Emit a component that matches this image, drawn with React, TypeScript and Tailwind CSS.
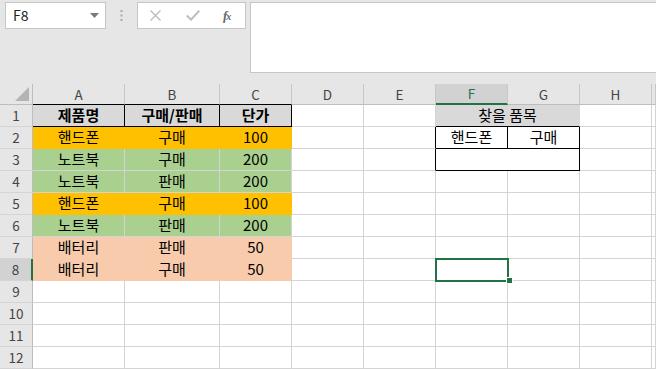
import React from "react";

type Cell = { t?: string; c?: string; span?: boolean };

const base =
  "h-[22px] border-r border-b border-[#d4d4d4] flex items-center justify-center text-[15px] text-black whitespace-nowrap";

const orange = "bg-[#ffc000] border-[#ffc000]";
const green = "bg-[#a9d08e] border-[#a9d08e]";
const peach = "bg-[#f8cbad] border-[#f8cbad]";
const head = "bg-[#d9d9d9] border-black font-bold";

function dataRow(a: string, b: string, c: string, fill: string): Cell[] {
  return [{ t: a, c: fill }, { t: b, c: fill }, { t: c, c: fill }];
}

const empty = (n: number): Cell[] => Array.from({ length: n }, () => ({}));

const rows: Cell[][] = [
  [
    { t: "제품명", c: head },
    { t: "구매/판매", c: head },
    { t: "단가", c: head },
    {},
    {},
    { t: "찾을 품목", c: "bg-[#d9d9d9] border-[#d9d9d9] border-b-black", span: true },
    {},
    {},
  ],
  [
    ...dataRow("핸드폰", "구매", "100", orange),
    {},
    { c: "border-r-black" },
    { t: "핸드폰", c: "border-black" },
    { t: "구매", c: "border-black" },
    {},
    {},
  ],
  [
    ...dataRow("노트북", "구매", "200", green),
    {},
    { c: "border-r-black" },
    { c: "border-black", span: true },
    {},
    {},
  ],
  [...dataRow("노트북", "판매", "200", green), ...empty(6)],
  [...dataRow("핸드폰", "구매", "100", orange), ...empty(6)],
  [...dataRow("노트북", "판매", "200", green), ...empty(6)],
  [...dataRow("배터리", "판매", "50", peach), ...empty(6)],
  [...dataRow("배터리", "구매", "50", peach), ...empty(6)],
  empty(9),
  empty(9),
  empty(9),
  empty(9),
];

const cols = ["A", "B", "C", "D", "E", "F", "G", "H", ""];

function TopBar() {
  return (
    <div className="h-[84px] bg-[#e6e6e6] flex items-start pt-[2px]">
      <div className="ml-[5px] w-[101px] h-[27px] bg-white border border-[#c6c6c6] flex items-center pl-[7px] pr-[6px] justify-between">
        <span className="text-[14px] text-[#222] font-['Noto_Sans_CJK_KR',sans-serif]">F8</span>
        <svg width="9" height="5" viewBox="0 0 9 5">
          <path d="M0 0 H9 L4.5 5 Z" fill="#7a7a7a" />
        </svg>
      </div>
      <div className="w-[31px] h-[27px] flex items-center justify-center">
        <svg width="3" height="11" viewBox="0 0 3 11">
          <rect x="0.5" y="0" width="2" height="2" fill="#a8a8a8" />
          <rect x="0.5" y="4.5" width="2" height="2" fill="#a8a8a8" />
          <rect x="0.5" y="9" width="2" height="2" fill="#a8a8a8" />
        </svg>
      </div>
      <div className="w-[109px] h-[27px] bg-white border border-[#c6c6c6] flex items-center">
        <svg className="ml-[12px]" width="11" height="11" viewBox="0 0 11 11">
          <path d="M0.5 0.5 L10.5 10.5 M10.5 0.5 L0.5 10.5" stroke="#bdbdbd" strokeWidth="1.4" />
        </svg>
        <svg className="ml-[25px]" width="14" height="11" viewBox="0 0 14 11">
          <path d="M0.8 5.5 L5 9.6 L13.3 0.8" stroke="#bdbdbd" strokeWidth="2" fill="none" />
        </svg>
        <span className="ml-[23px] text-[13px] italic font-bold text-[#666] font-['Liberation_Serif',serif] tracking-[-1px]">
          f<span className="text-[10px]">x</span>
        </span>
      </div>
      <div className="ml-[4px] flex-1 h-[71px] bg-white border border-r-0 border-[#c6c6c6]" />
    </div>
  );
}

export default function App() {
  return (
    <div className="w-[656px] h-[369px] overflow-hidden bg-white font-['Noto_Sans_CJK_KR','Noto_Sans',sans-serif]">
      <TopBar />
      <div className="relative grid grid-cols-[33px_92px_95px_72px_72px_72px_72px_72px_72px_1fr]">
        {/* column header row */}
        <div className="h-[21px] bg-[#e6e6e6] border-r border-b border-[#bdbdbd] flex items-end justify-end pr-[3px] pb-[3px]">
          <svg width="14" height="14" viewBox="0 0 14 14">
            <path d="M14 0 V14 H0 Z" fill="#b4b4b4" />
          </svg>
        </div>
        {cols.map((c, i) => (
          <div
            key={c + i}
            className={
              c === "F"
                ? "h-[21px] bg-[#d2d2d2] border-r border-[#c8c8c8] border-b-2 border-b-[#217346] flex items-center justify-center text-[13.5px] text-[#217346]"
                : i < 3
                ? "h-[21px] bg-[#e6e6e6] border-r border-[#c8c8c8] border-b border-b-black flex items-center justify-center text-[13.5px] text-[#444]"
                : "h-[21px] bg-[#e6e6e6] border-r border-[#c8c8c8] border-b border-b-[#bdbdbd] flex items-center justify-center text-[13.5px] text-[#444]"
            }
          >
            {c}
          </div>
        ))}

        {rows.map((row, r) => (
          <React.Fragment key={r}>
            <div
              className={
                r === 7
                  ? "h-[22px] bg-[#d2d2d2] border-b border-[#d4d4d4] border-r-2 border-r-[#217346] flex items-center justify-center text-[13.5px] text-[#444]"
                  : "h-[22px] bg-[#e6e6e6] border-b border-[#d4d4d4] border-r border-r-[#bdbdbd] flex items-center justify-center text-[13.5px] text-[#444]"
              }
            >
              {r + 1}
            </div>
            {row.map((cell, i) => (
              <div key={i} className={`${base} ${cell.c ?? ""} ${cell.span ? "col-span-2" : ""}`}>
                {cell.t}
              </div>
            ))}
          </React.Fragment>
        ))}

        {/* active cell F8 */}
        <div className="absolute left-[435px] top-[174px] w-[74px] h-[24px] border-2 border-[#217346] pointer-events-none" />
        <div className="absolute left-[506px] top-[193px] w-[7px] h-[7px] bg-[#217346] border border-white pointer-events-none" />
      </div>
    </div>
  );
}
